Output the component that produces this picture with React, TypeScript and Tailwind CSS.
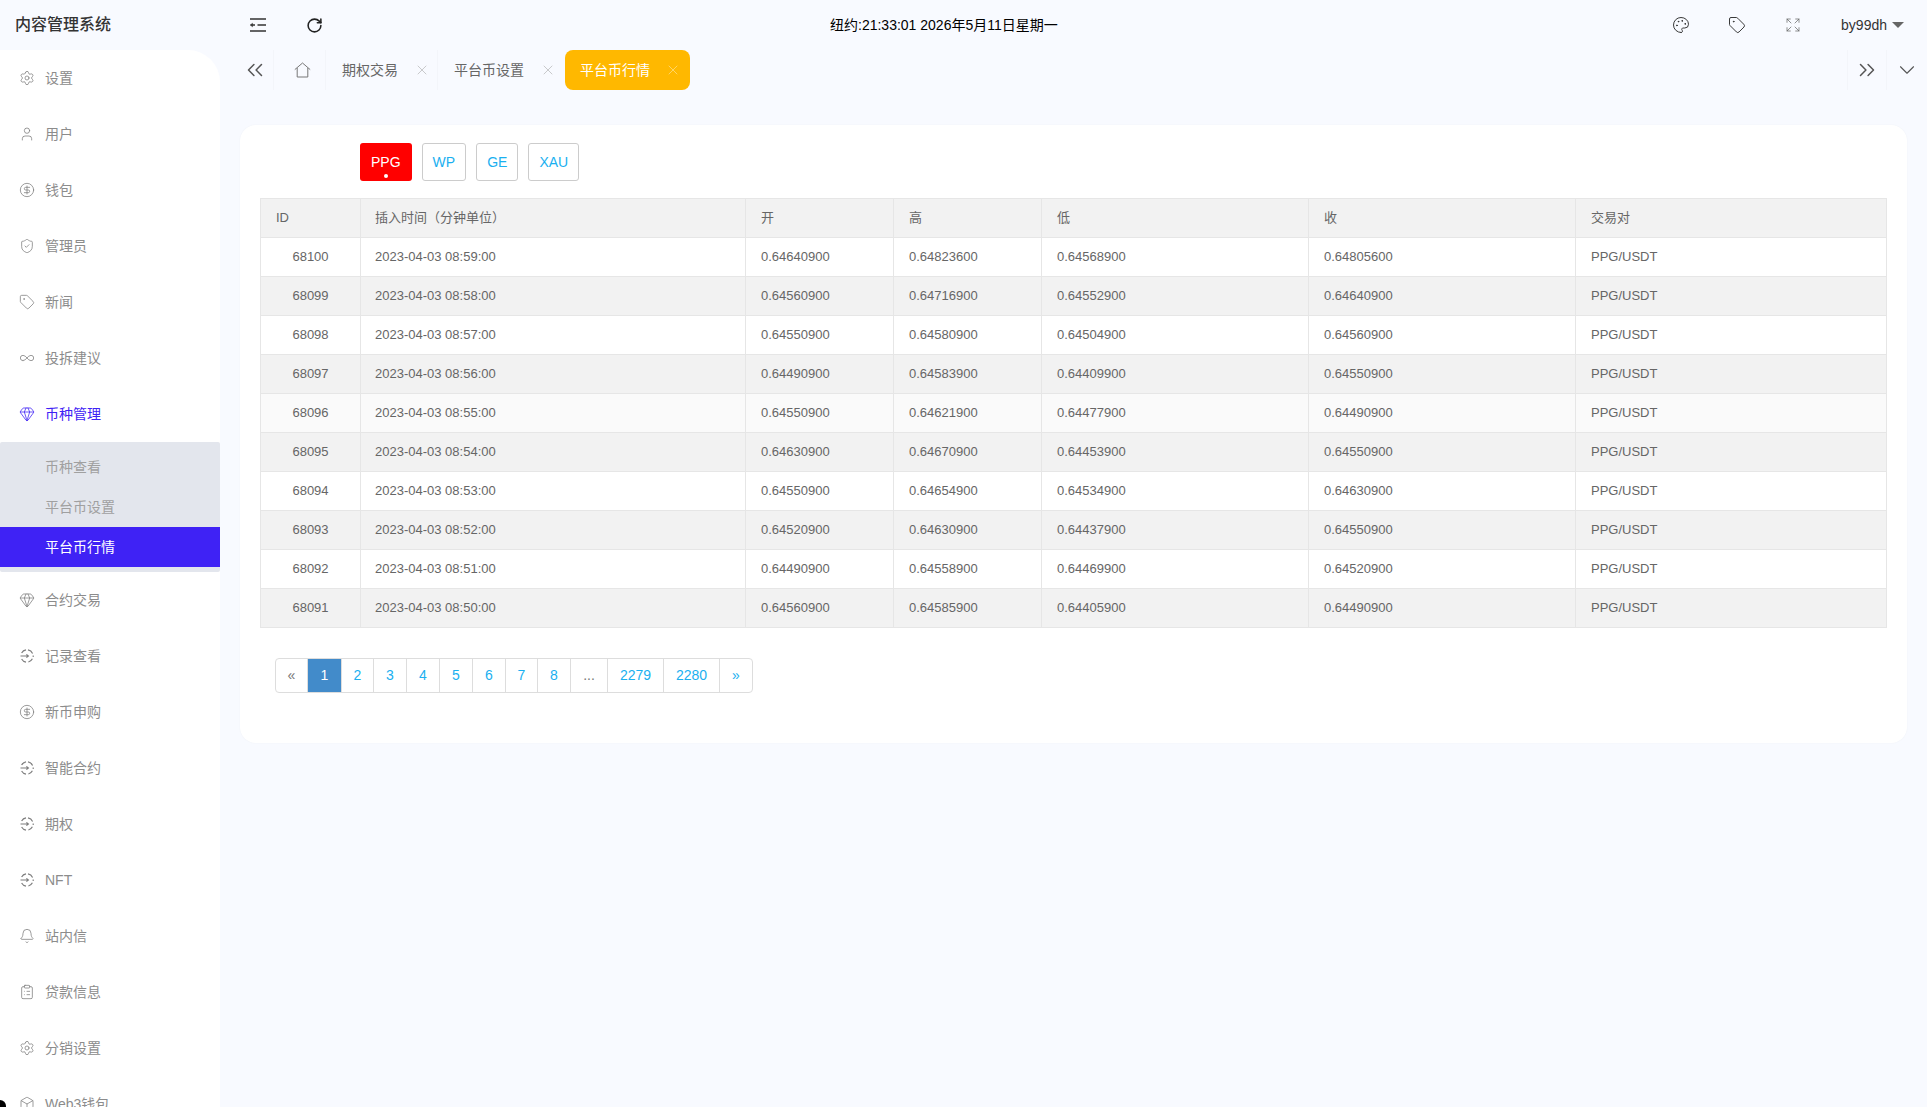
import { Bell, Box, ChevronDown, ChevronsLeft, ChevronsRight, CircleDollarSign, ClipboardList, Expand, Gem, Infinity as InfinityIcon, Palette, RotateCw, Settings, ShieldCheck, Tag, User, X } from "lucide-react";

// dashed circle with an arrow going in, used by several menu rows
function RecordIcon({ size = 16, strokeWidth = 1, className = "" }: { size?: number; strokeWidth?: number; className?: string }) {
  return (
    <svg width={size} height={size} viewBox="0 0 16 16" fill="none" stroke="currentColor" strokeWidth={strokeWidth} className={className}>
      <path d="M2.6 5A6.2 6.2 0 0 1 7 1.9M9 1.9A6.2 6.2 0 0 1 13.6 5.5M14.2 7.5V9M13.4 10.8A6.2 6.2 0 0 1 9.4 14M7 14.1A6.2 6.2 0 0 1 2.6 11" />
      <path d="M1.5 8H9M7.4 6.4 9.4 8 7.4 9.6" />
    </svg>
  );
}

const menuTop = [
  { label: "设置", icon: Settings },
  { label: "用户", icon: User },
  { label: "钱包", icon: CircleDollarSign },
  { label: "管理员", icon: ShieldCheck },
  { label: "新闻", icon: Tag },
  { label: "投拆建议", icon: InfinityIcon },
];

const menuBottom = [
  { label: "合约交易", icon: Gem },
  { label: "记录查看", icon: RecordIcon },
  { label: "新币申购", icon: CircleDollarSign },
  { label: "智能合约", icon: RecordIcon },
  { label: "期权", icon: RecordIcon },
  { label: "NFT", icon: RecordIcon },
  { label: "站内信", icon: Bell },
  { label: "贷款信息", icon: ClipboardList },
  { label: "分销设置", icon: Settings },
  { label: "Web3钱包", icon: Box },
];

const rows = [
  ["68100", "2023-04-03 08:59:00", "0.64640900", "0.64823600", "0.64568900", "0.64805600"],
  ["68099", "2023-04-03 08:58:00", "0.64560900", "0.64716900", "0.64552900", "0.64640900"],
  ["68098", "2023-04-03 08:57:00", "0.64550900", "0.64580900", "0.64504900", "0.64560900"],
  ["68097", "2023-04-03 08:56:00", "0.64490900", "0.64583900", "0.64409900", "0.64550900"],
  ["68096", "2023-04-03 08:55:00", "0.64550900", "0.64621900", "0.64477900", "0.64490900"],
  ["68095", "2023-04-03 08:54:00", "0.64630900", "0.64670900", "0.64453900", "0.64550900"],
  ["68094", "2023-04-03 08:53:00", "0.64550900", "0.64654900", "0.64534900", "0.64630900"],
  ["68093", "2023-04-03 08:52:00", "0.64520900", "0.64630900", "0.64437900", "0.64550900"],
  ["68092", "2023-04-03 08:51:00", "0.64490900", "0.64558900", "0.64469900", "0.64520900"],
  ["68091", "2023-04-03 08:50:00", "0.64560900", "0.64585900", "0.64405900", "0.64490900"],
];

const pages = [
  { label: "«", w: "w-[32px]", muted: true },
  { label: "1", w: "w-[34px]", active: true },
  { label: "2", w: "w-[32px]" },
  { label: "3", w: "w-[33px]" },
  { label: "4", w: "w-[33px]" },
  { label: "5", w: "w-[33px]" },
  { label: "6", w: "w-[33px]" },
  { label: "7", w: "w-[32px]" },
  { label: "8", w: "w-[33px]" },
  { label: "...", w: "w-[37px]", muted: true },
  { label: "2279", w: "w-[56px]" },
  { label: "2280", w: "w-[56px]" },
  { label: "»", w: "w-[32px]" },
];

function MenuItem({ label, icon: Icon, active }: { label: string; icon: React.ComponentType<{ size?: number; strokeWidth?: number; className?: string }>; active?: boolean }) {
  return (
    <div className={`flex h-[56px] shrink-0 items-center pl-[19px] text-[14px] ${active ? "text-[#3f22f5]" : "text-[#8c8c8c]"}`}>
      <Icon size={16} strokeWidth={1.15} className={`mr-[10px] shrink-0 ${active ? "" : "text-[#7d7d7d]"}`} />
      {label}
    </div>
  );
}

function Symbol({ label, on }: { label: string; on?: boolean }) {
  return (
    <button className={`relative h-[38px] rounded-[3px] text-[14px] ${on ? "bg-[#ff0000] px-[11px] text-white" : "border border-[#cccccc] bg-white px-[10px] text-[#1ab0f0]"}`}>
      {label}
      {on && <span className="absolute bottom-[3px] left-1/2 h-[4px] w-[4px] -translate-x-1/2 rounded-full bg-white" />}
    </button>
  );
}

export default function App() {
  return (
    <div className="relative flex h-[1107px] flex-col overflow-hidden bg-[#f8faff] font-['Liberation_Sans','Noto_Sans_CJK_SC',sans-serif] text-[14px]">
      <header className="flex h-[50px] shrink-0 items-center">
        <div className="w-[240px] pl-[15px] text-[16px] font-medium text-[#333333]">内容管理系统</div>
        <svg width="16" height="14" viewBox="0 0 16 14" fill="none" stroke="#333333" strokeWidth="1.4" className="ml-[10px]">
          <path d="M0 1H16M7.5 7H16M0 13H16M2 7H5" />
          <path d="M0 7 2.6 5.2V8.8Z" fill="#333333" strokeWidth="0.4" />
        </svg>
        <RotateCw size={17} strokeWidth={2.2} className="ml-[40px] text-[#222222]" />
        <div className="ml-[507px] w-[499px] text-black">纽约:21:33:01 2026年5月11日星期一</div>
        <div className="flex flex-1 items-center justify-end text-[#333333]">
          <Palette size={18} strokeWidth={1.3} />
          <Tag size={18} strokeWidth={1.3} className="ml-[38px]" />
          <Expand size={16} strokeWidth={1.1} className="ml-[39px] text-[#666666]" />
          <span className="ml-[40px] text-[14px]">by99dh</span>
          <span className="ml-[5px] mr-[23px] h-0 w-0 border-x-[6px] border-t-[6px] border-x-transparent border-t-[#666666]" />
        </div>
      </header>
      <div className="flex min-h-0 flex-1">
        <aside className="flex w-[220px] shrink-0 flex-col overflow-hidden rounded-tr-[32px] bg-white">
          {menuTop.map((m) => (
            <MenuItem key={m.label} label={m.label} icon={m.icon} />
          ))}
          <MenuItem label="币种管理" icon={Gem} active />
          <div className="shrink-0 rounded-[2px] bg-[#e3e6ed] pb-[5px] pt-[5px] text-[14px] text-[#a0a0a0]">
            <div className="flex h-[40px] items-center pl-[45px]">币种查看</div>
            <div className="flex h-[40px] items-center pl-[45px]">平台币设置</div>
            <div className="flex h-[40px] items-center bg-[#3f22f5] pl-[45px] text-white">平台币行情</div>
          </div>
          {menuBottom.map((m) => (
            <MenuItem key={m.label} label={m.label} icon={m.icon} />
          ))}
        </aside>
        <main className="min-w-0 flex-1">
          <div className="flex h-[40px] items-center text-[14px] text-[#666666]">
            <div className="flex h-full w-[54px] items-center justify-end border-r border-[#f3f5fa] pr-[5px]">
              <ChevronsLeft size={26} strokeWidth={1.4} className="text-[#555555]" />
            </div>
            <div className="flex h-full w-[52px] items-center justify-center border-r border-[#f3f5fa]">
              <svg width="17" height="16" viewBox="0 0 17 16" fill="none" stroke="#777777" strokeWidth="1" className="ml-[5px]">
                <path d="M.8 7.6 8.5 1l7.7 6.6M3.2 6v9h10.6V6" />
              </svg>
            </div>
            <div className="flex h-full w-[112px] items-center border-r border-[#f3f5fa] pl-[16px]">
              期权交易
              <X size={16} strokeWidth={0.9} className="ml-[16px] text-[#a8a8a8]" />
            </div>
            <div className="flex h-full w-[127px] items-center pl-[16px]">
              平台币设置
              <X size={16} strokeWidth={0.9} className="ml-[16px] text-[#a8a8a8]" />
            </div>
            <div className="flex h-full w-[125px] items-center rounded-[8px] bg-[#ffb800] pl-[15px] text-white">
              平台币行情
              <X size={16} strokeWidth={0.9} className="ml-[15px] text-[#ffe7a8]" />
            </div>
            <div className="ml-auto flex h-full w-[40px] items-center justify-center border-x border-[#f3f5fa]">
              <ChevronsRight size={26} strokeWidth={1.4} className="text-[#555555]" />
            </div>
            <div className="flex h-full w-[40px] items-center justify-center">
              <ChevronDown size={26} strokeWidth={1} className="text-[#555555]" />
            </div>
          </div>
          <section className="mx-[20px] mt-[35px] h-[618px] rounded-[16px] bg-white pl-[20px] pr-[20px] pt-[18px] shadow-[0_0_2px_rgba(0,0,0,0.04)]">
            <div className="flex gap-[10px] pl-[100px]">
              <Symbol label="PPG" on />
              <Symbol label="WP" />
              <Symbol label="GE" />
              <Symbol label="XAU" />
            </div>
            <table className="mt-[17px] w-[1627px] table-fixed border-collapse text-left text-[13px] text-[#666666]">
              <colgroup>
                <col className="w-[100px]" />
                <col className="w-[385px]" />
                <col className="w-[148px]" />
                <col className="w-[148px]" />
                <col className="w-[267px]" />
                <col className="w-[267px]" />
                <col />
              </colgroup>
              <thead>
                <tr className="h-[39px] bg-[#f2f2f2]">
                  {["ID", "插入时间（分钟单位）", "开", "高", "低", "收", "交易对"].map((h, i) => (
                    <th key={h} className={`border border-[#e6e6e6] font-normal ${i === 1 ? "px-[14px]" : "px-[15px]"}`}>{h}</th>
                  ))}
                </tr>
              </thead>
              <tbody>
                {rows.map((r, i) => (
                  <tr key={r[0]} className={`h-[39px] ${i % 2 === 1 ? "bg-[#f2f2f2]" : i === 4 ? "bg-[#fafafa]" : "bg-white"}`}>
                    <td className="border border-[#e6e6e6] px-[15px] text-center">{r[0]}</td>
                    {r.slice(1).map((c, j) => (
                      <td key={j} className={`border border-[#e6e6e6] ${j === 0 ? "px-[14px]" : "px-[15px]"}`}>{c}</td>
                    ))}
                    <td className="border border-[#e6e6e6] px-[15px]">PPG/USDT</td>
                  </tr>
                ))}
              </tbody>
            </table>
            <div className="ml-[15px] mt-[30px] inline-flex h-[35px] overflow-hidden rounded-[4px] border border-[#dddddd]">
              {pages.map((p) => (
                <span
                  key={p.label}
                  className={`flex items-center justify-center border-r border-[#dddddd] last:border-r-0 ${p.w} ${p.active ? "bg-[#428bca] text-white" : p.muted ? "text-[#777777]" : "text-[#1ab0f0]"}`}
                >
                  {p.label}
                </span>
              ))}
            </div>
          </section>
        </main>
      </div>
      {/* black corner bottom left in the capture */}
      <div className="absolute bottom-0 left-0 h-[7px] w-[6px] rounded-tr-full bg-black" />
    </div>
  );
}
